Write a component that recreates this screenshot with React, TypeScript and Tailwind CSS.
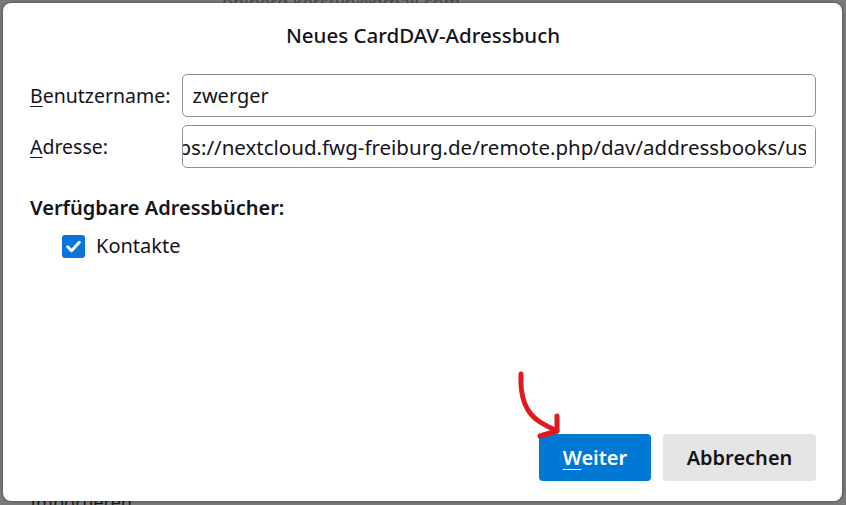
import React from 'react';

const font = { fontFamily: '"Noto Sans", "Open Sans", sans-serif' };

function Field({ accel, rest, children }: { accel: string; rest: string; children: React.ReactNode }) {
  return (
    <>
      <label className="whitespace-nowrap text-[19.5px] text-[#15141a]">
        <span className="underline underline-offset-[3px] decoration-1">{accel}</span>
        {rest}
      </label>
      <div className="flex h-[43px] items-center overflow-hidden rounded-[5px] border border-[#8f8f9d] bg-white">
        {children}
      </div>
    </>
  );
}

export default function App() {
  return (
    <div className="relative h-[505px] w-[846px] overflow-hidden bg-[#7a7a7a]" style={font}>
      {/* faint window content behind the dialog */}
      <div className="absolute left-[222px] top-[-8px] text-[18px] leading-[20px] text-[#4a4a4a]">ohlberg.kerstyn@gmail.com</div>
      <div className="absolute left-[30px] top-[492px] text-[18px] leading-[20px] text-[#1a1a1a]">Importieren</div>

      <div className="relative ml-[3px] mt-[3px] flex h-[498px] w-[839px] flex-col rounded-[8px] bg-white pl-[27px] pr-[26px] text-[#15141a] shadow-[0_0_3px_rgba(0,0,0,0.5)]">
        <h1 className="pt-[18px] text-center text-[20.5px] font-medium leading-[28px]">Neues CardDAV-Adressbuch</h1>

        <div className="mt-[25px] grid grid-cols-[auto_1fr] items-center gap-x-[11px] gap-y-[8px]">
          <Field accel="B" rest="enutzername:">
            <span className="pl-[10px] text-[20px]">zwerger</span>
          </Field>
          <Field accel="A" rest="dresse:">
            <div className="relative h-full flex-1 overflow-hidden">
              <span className="absolute left-[-4px] top-1/2 -translate-y-1/2 whitespace-nowrap text-[20.5px]">
                ps://nextcloud.fwg-freiburg.de/remote.php/dav/addressbooks/users/zwerger/
              </span>
            </div>
            <div className="h-full w-[9px] shrink-0 bg-white" />
          </Field>
        </div>

        <div className="mt-[26px] text-[20px] font-semibold leading-[28px]">Verfügbare Adressbücher:</div>
        <label className="ml-[32px] mt-[12px] flex items-center gap-[11px] text-[20px] leading-[24px]">
          <span className="flex h-[23px] w-[23px] items-center justify-center rounded-[3px] bg-[#0b74d7]">
            <svg width="17" height="17" viewBox="0 0 16 16" fill="none">
              <path d="M2.5 8.3l3.7 3.7 7.3-8" stroke="white" strokeWidth="2.8" strokeLinecap="round" strokeLinejoin="round" />
            </svg>
          </span>
          Kontakte
        </label>

        <div className="mt-auto mb-[20px] flex justify-end gap-[12px]">
          <button className="h-[47px] w-[112px] rounded-[4px] bg-[#0078d4] text-[20px] font-semibold text-white">
            <span className="underline underline-offset-[4px] decoration-1">W</span>eiter
          </button>
          <button className="h-[47px] w-[153px] rounded-[4px] bg-[#e5e5e5] text-[20px] font-semibold text-[#15141a]">
            Abbrechen
          </button>
        </div>
      </div>

      {/* red annotation arrow */}
      <svg className="absolute left-0 top-0" width="846" height="505" viewBox="0 0 846 505" fill="none">
        <path d="M521 374 C520 395 524 412 540 422 C548 427 553 429 557 431" stroke="#e0191e" strokeWidth="5" strokeLinecap="round" strokeLinejoin="round" />
        <path d="M557 416 L557 431 L540 436" stroke="#e0191e" strokeWidth="5" strokeLinecap="round" strokeLinejoin="round" />
      </svg>
    </div>
  );
}
